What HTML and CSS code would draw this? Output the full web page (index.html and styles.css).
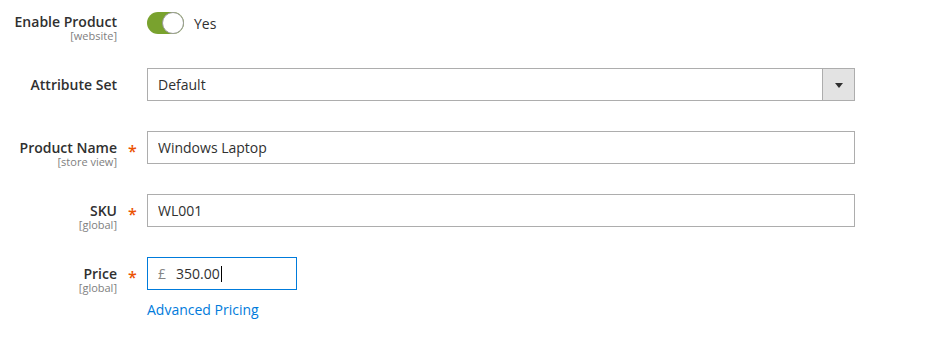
FILE: index.html
```html
<!DOCTYPE html>
<html lang="en">
<head>
<meta charset="utf-8">
<title>Product</title>
<link rel="stylesheet" href="styles.css">
</head>
<body>
<form class="product-form">
  <div class="field field-switch">
    <div class="field-label"><span class="label-text">Enable Product</span><span class="scope">[website]</span></div>
    <div class="field-req"></div>
    <div class="field-control switch-control">
      <span class="switch"><span class="switch-knob"></span></span>
      <span class="switch-text">Yes</span>
    </div>
  </div>

  <div class="field">
    <div class="field-label"><span class="label-text">Attribute Set</span></div>
    <div class="field-req"></div>
    <div class="field-control">
      <div class="select">
        <span class="select-value">Default</span>
        <span class="select-btn"><span class="select-arrow"></span></span>
      </div>
    </div>
  </div>

  <div class="field">
    <div class="field-label"><span class="label-text">Product Name</span><span class="scope">[store view]</span></div>
    <div class="field-req"><span class="asterisk">*</span></div>
    <div class="field-control">
      <input class="input" type="text" value="Windows Laptop">
    </div>
  </div>

  <div class="field">
    <div class="field-label"><span class="label-text">SKU</span><span class="scope">[global]</span></div>
    <div class="field-req"><span class="asterisk">*</span></div>
    <div class="field-control">
      <input class="input" type="text" value="WL001">
    </div>
  </div>

  <div class="field">
    <div class="field-label"><span class="label-text">Price</span><span class="scope">[global]</span></div>
    <div class="field-req"><span class="asterisk">*</span></div>
    <div class="field-control">
      <div class="price-input">
        <span class="currency">£</span>
        <span class="price-value">350.00</span><span class="caret"></span>
      </div>
      <a class="link" href="#">Advanced Pricing</a>
    </div>
  </div>
</form>
</body>
</html>
```

FILE: styles.css
```css
html, body {
  margin: 0;
  padding: 0;
  background: #ffffff;
}

body {
  font-family: "Open Sans", "Noto Sans", sans-serif;
  color: #303030;
  font-size: 14px;
}

.product-form {
  display: flex;
  flex-direction: column;
  gap: 30px;
  padding-top: 5px;
}

.field {
  display: grid;
  grid-template-columns: 117px 30px 708px;
  align-items: start;
}

.field-label {
  display: flex;
  flex-direction: column;
  align-items: flex-end;
  text-align: right;
  box-sizing: border-box;
  height: 33px;
  padding-top: 8px;
}

.label-text {
  font-size: 14px;
  font-weight: 600;
  line-height: 17px;
  color: #303030;
  white-space: nowrap;
}

.scope {
  font-size: 11px;
  line-height: 12px;
  color: #808080;
  white-space: nowrap;
}

.field-req {
  padding-left: 11px;
  padding-top: 11px;
}

.asterisk {
  display: block;
  color: #eb5202;
  font-size: 16px;
  line-height: 19px;
  font-weight: 600;
}

.field-control {
  display: flex;
  flex-direction: column;
  align-items: flex-start;
}

.switch-control {
  flex-direction: row;
  align-items: center;
  padding-top: 7px;
}

.switch {
  display: flex;
  justify-content: flex-end;
  box-sizing: border-box;
  width: 37px;
  height: 22px;
  border-radius: 11px;
  background: #79a22e;
}

.switch-knob {
  box-sizing: border-box;
  width: 22px;
  height: 22px;
  border-radius: 50%;
  background: #ffffff;
  border: 1px solid #9a9a9a;
}

.switch-text {
  margin-left: 10px;
  line-height: 19px;
  font-size: 14px;
  color: #303030;
}

.select {
  display: flex;
  align-items: stretch;
  box-sizing: border-box;
  width: 708px;
  height: 33px;
  border: 1px solid #adadad;
  background: #ffffff;
}

.select-value {
  flex: 1;
  padding-left: 10px;
  line-height: 31px;
  font-size: 14px;
  color: #303030;
}

.select-btn {
  display: flex;
  align-items: center;
  justify-content: center;
  width: 31px;
  border-left: 1px solid #adadad;
  background: #e3e3e3;
}

.select-arrow {
  width: 0;
  height: 0;
  border-left: 4px solid transparent;
  border-right: 4px solid transparent;
  border-top: 5px solid #303030;
  margin-top: 1px;
}

.input {
  box-sizing: border-box;
  width: 708px;
  height: 33px;
  margin: 0;
  border: 1px solid #adadad;
  border-radius: 0;
  padding: 0 10px;
  font-family: "Open Sans", "Noto Sans", sans-serif;
  font-size: 14px;
  color: #303030;
  background: #ffffff;
  outline: none;
}

.price-input {
  display: flex;
  align-items: center;
  box-sizing: border-box;
  width: 150px;
  height: 33px;
  border: 1px solid #007bdb;
  padding: 0 10px;
}

.currency {
  color: #858585;
  font-size: 14px;
  line-height: 19px;
  margin-right: 10px;
}

.price-value {
  font-size: 14px;
  line-height: 19px;
  color: #303030;
}

.caret {
  width: 1px;
  height: 16px;
  background: #000000;
  margin-left: 1px;
}

.link {
  margin-top: 10px;
  font-size: 14px;
  line-height: 19px;
  color: #007bdb;
  text-decoration: none;
}
```
